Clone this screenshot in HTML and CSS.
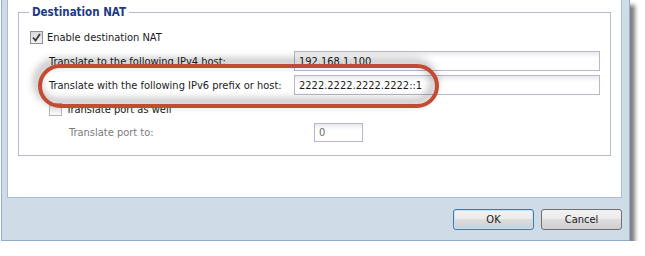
FILE: index.html
```html
<!DOCTYPE html>
<html>
	<head>
		<meta charset="UTF-8">
		<title>Destination NAT</title>
		<link rel="stylesheet" href="styles.css">
	</head>
	<body>
		<div class="window">
			<div class="panel">
				<fieldset class="group">
					<legend>Destination NAT</legend>
					<div class="row">
						<span class="check on"><svg width="9" height="9" viewBox="0 0 9 9"><path d="M1 4.5 L3.5 7.5 L8 1" fill="none" stroke="#3a3a3a" stroke-width="1.8"/></svg></span>
						<span class="txt">Enable destination NAT</span>
					</div>
					<div class="row sub">
						<span class="lbl">Translate to the following IPv4 host:</span>
						<span class="field wide">192.168.1.100</span>
					</div>
					<div class="row sub">
						<span class="lbl">Translate with the following IPv6 prefix or host:</span>
						<span class="field wide">2222.2222.2222.2222::1</span>
					</div>
					<div class="row sub">
						<span class="check"></span>
						<span class="txt">Translate port as well</span>
					</div>
					<div class="row sub deep off">
						<span class="lbl">Translate port to:</span>
						<span class="field small">0</span>
					</div>
				</fieldset>
				<div class="mark"></div>
			</div>
			<div class="foot">
				<span class="btn def">OK</span>
				<span class="btn">Cancel</span>
			</div>
		</div>
	</body>
</html>
```

FILE: styles.css
```css
*{margin:0;padding:0;box-sizing:border-box}
body{background:#fff;font-family:"DejaVu Sans Condensed","DejaVu Sans",sans-serif;font-size:11px;color:#1b1b1b}
.window{width:629px;margin-left:1px;background:#d0dbe8;border:1px solid #94acd4;border-top:0;padding:0 7px 0 5px;box-shadow:5px 5px 4px rgba(0,0,0,.5)}
.panel{position:relative;height:198px;background:#fff;border:1px solid #a5bce2;border-top:0;padding:5px 10px 0 10px}
.group{border:1px solid #b8b9cd;padding:9px 10px 13px 11px;display:flex;flex-direction:column;gap:4px}
.group legend{font-weight:bold;font-size:11.5px;line-height:14px;color:#1c3a86;padding:0 3px;margin-left:-1px}
.row{display:flex;align-items:center;height:20px}
.row:first-of-type{height:19px}
.sub{padding-left:19px}
.deep{padding-left:39px;height:19px}
.check{width:13px;height:13px;border:1px solid #8f8f8f;background:linear-gradient(#d9d9d9,#f4f4f4);display:flex;align-items:center;justify-content:center;margin-right:4px}
.sub .check{border-color:#b5b5b5;background:linear-gradient(#e4e4e4,#fafafa)}
.lbl{width:245px}
.off{color:#7b7b7b}
.field{height:100%;border:1px solid #b6b7cc;background:linear-gradient(#e9e9e9,#fff 6px);padding:0 4px;display:flex;align-items:center}
.wide{width:306px}
.small{width:49px;color:#6a6a6a}
.mark{position:absolute;left:30px;top:64px;width:401px;height:44px;border:4px solid #c24c33;border-radius:22px;filter:drop-shadow(-3px -4px 4px rgba(0,0,0,.45))}
.foot{height:42px;display:flex;justify-content:flex-end;align-items:center;gap:7px;padding-top:1px}
.btn{width:81px;height:21px;border:1px solid #707070;border-radius:3px;background:linear-gradient(#f2f2f2,#ebebeb 50%,#dddddd 50%,#cfcfcf);display:flex;align-items:center;justify-content:center}
.def{border-color:#3d7bad;box-shadow:inset 0 0 0 1px #c5e2f7}
```
